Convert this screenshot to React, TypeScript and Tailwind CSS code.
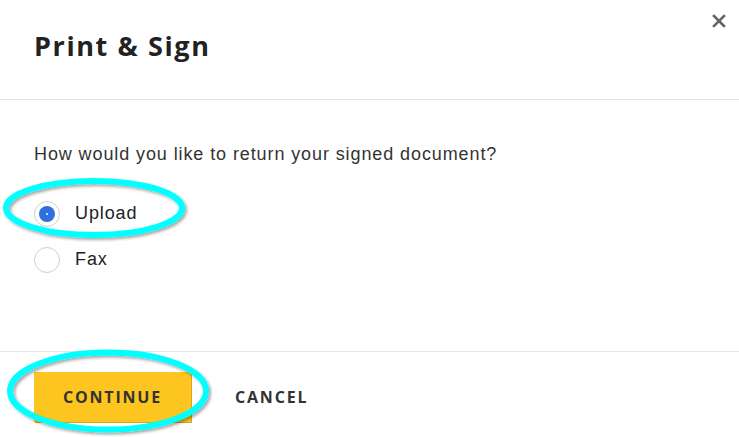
import React from "react";

function Radio({ checked }: { checked?: boolean }) {
  return (
    <div className="w-[26px] h-[26px] rounded-full border border-[#cfcfcf] bg-white flex items-center justify-center">
      {checked && (
        <div className="w-[16px] h-[16px] rounded-full bg-[#2f6fde] flex items-center justify-center">
          <div className="w-[2px] h-[2px] rounded-full bg-white" />
        </div>
      )}
    </div>
  );
}

export default function App() {
  return (
    <div className="relative w-[739px] h-[437px] bg-white overflow-hidden flex flex-col">
      <div className="h-[100px] border-b border-[#e6e6e6] flex items-start justify-between px-[34px] pt-[28px] shrink-0">
        <h1 className="text-[27px] leading-[36px] font-bold text-[#222] tracking-[1.6px] [font-family:'Open_Sans',sans-serif]">
          Print &amp; Sign
        </h1>
      </div>
      <button className="absolute top-[14px] right-[13px] w-[14px] h-[14px] flex items-center justify-center">
        <svg width="14" height="14" viewBox="0 0 14 14">
          <path d="M2 2 L12 12 M12 2 L2 12" stroke="#666" strokeWidth="2.6" strokeLinecap="square" />
        </svg>
      </button>

      <div className="flex-1 px-[34px] pt-[42px] [font-family:'Liberation_Sans',Arial,sans-serif]">
        <p className="text-[18px] leading-[24px] tracking-[0.9px] text-[#333]">How would you like to return your signed document?</p>
        <div className="mt-[34px] flex flex-col gap-[19px]">
          <div className="flex items-center gap-[15px]">
            <Radio checked />
            <span className="text-[18px] tracking-[0.9px] text-[#222]">Upload</span>
          </div>
          <div className="flex items-center gap-[15px]">
            <Radio />
            <span className="text-[18px] tracking-[0.9px] text-[#222]">Fax</span>
          </div>
        </div>
      </div>

      <div className="h-[86px] border-t border-[#e6e6e6] shrink-0 px-[34px] pt-[20px] flex items-start gap-[44px] [font-family:'Open_Sans',sans-serif]">
        <button className="w-[157px] h-[50px] bg-[#fdc51f] text-[#333] text-[16px] font-bold tracking-[1.8px] shadow-[1px_1px_0_#e0a416]">
          CONTINUE
        </button>
        <button className="h-[50px] text-[#333] text-[16px] font-bold tracking-[1.8px]">
          CANCEL
        </button>
      </div>

      <svg className="absolute left-0 top-0 pointer-events-none" width="739" height="437">
        <defs>
          <filter id="sh" x="-20%" y="-20%" width="140%" height="140%">
            <feDropShadow dx="2" dy="2" stdDeviation="1.5" floodColor="#000" floodOpacity="0.35" />
          </filter>
        </defs>
        <ellipse cx="94" cy="208" rx="88" ry="27" fill="none" stroke="#00ffff" strokeWidth="6" filter="url(#sh)" />
        <ellipse cx="108" cy="391" rx="98" ry="38.5" fill="none" stroke="#00ffff" strokeWidth="6" filter="url(#sh)" />
      </svg>
    </div>
  );
}
